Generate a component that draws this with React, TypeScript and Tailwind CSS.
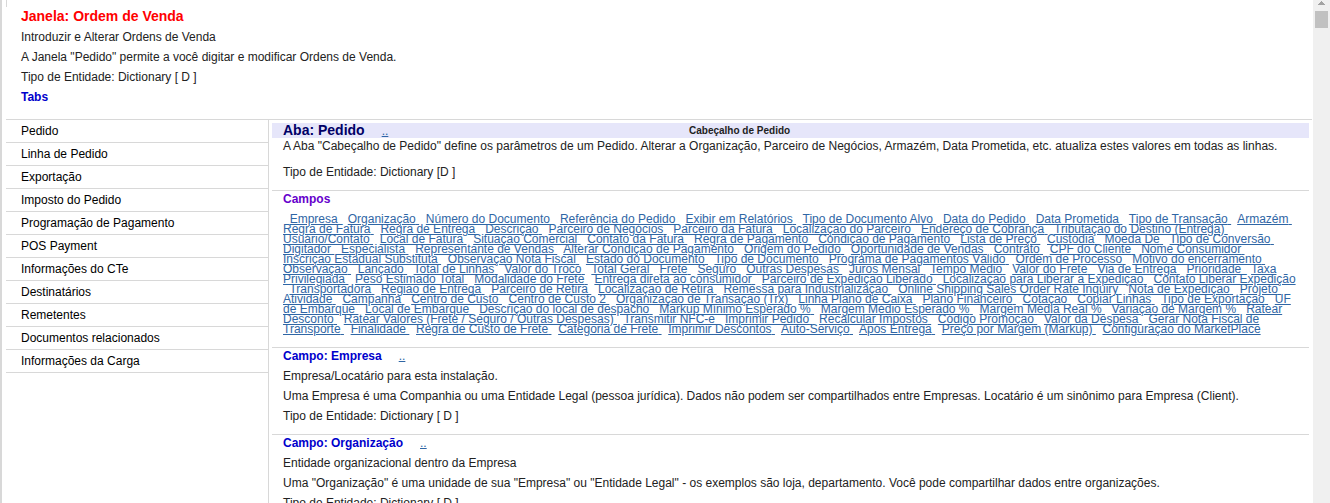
const tabs = [
  'Pedido',
  'Linha de Pedido',
  'Exportação',
  'Imposto do Pedido',
  'Programação de Pagamento',
  'POS Payment',
  'Informações do CTe',
  'Destinatários',
  'Remetentes',
  'Documentos relacionados',
  'Informações da Carga',
]

const fields = [
  'Empresa', 'Organização', 'Número do Documento', 'Referência do Pedido',
  'Exibir em Relatórios', 'Tipo de Documento Alvo', 'Data do Pedido',
  'Data Prometida', 'Tipo de Transação', 'Armazém', 'Regra de Fatura',
  'Regra de Entrega', 'Descrição', 'Parceiro de Negócios',
  'Parceiro da Fatura', 'Localização do Parceiro', 'Endereço de Cobrança',
  'Tributação do Destino (Entrega)', 'Usuário/Contato', 'Local de Fatura',
  'Situação Comercial', 'Contato da Fatura', 'Regra de Pagamento',
  'Condição de Pagamento', 'Lista de Preço', 'Custódia', 'Moeda De',
  'Tipo de Conversão', 'Digitador', 'Especialista',
  'Representante de Vendas', 'Alterar Condição de Pagamento',
  'Origem do Pedido', 'Oportunidade de Vendas', 'Contrato',
  'CPF do Cliente', 'Nome Consumidor', 'Inscrição Estadual Substituta',
  'Observação Nota Fiscal', 'Estado do Documento', 'Tipo de Documento',
  'Programa de Pagamentos Válido', 'Ordem de Processo',
  'Motivo do encerramento', 'Observação', 'Lançado', 'Total de Linhas',
  'Valor do Troco', 'Total Geral', 'Frete', 'Seguro', 'Outras Despesas',
  'Juros Mensal', 'Tempo Médio', 'Valor do Frete', 'Via de Entrega',
  'Prioridade', 'Taxa Privilegiada', 'Peso Estimado Total',
  'Modalidade do Frete', 'Entrega direta ao consumidor',
  'Parceiro de Expedição Liberado', 'Localização para Liberar a Expedição',
  'Contato Liberar Expedição', 'Transportadora', 'Região de Entrega',
  'Parceiro de Retira', 'Localização de Retira',
  'Remessa para Industrialização',
  'Online Shipping Sales Order Rate Inquiry', 'Nota de Expedição',
  'Projeto', 'Atividade', 'Campanha', 'Centro de Custo',
  'Centro de Custo 2', 'Organização de Transação (Trx)',
  'Linha Plano de Caixa', 'Plano Financeiro', 'Cotação',
  'Copiar Linhas', 'Tipo de Exportação', 'UF de Embarque',
  'Local de Embarque', 'Descrição do local de despacho',
  'Markup Mínimo Esperado %', 'Margem Médio Esperado %',
  'Margem Média Real %', 'Variação de Margem %', 'Ratear Desconto',
  'Ratear Valores (Frete / Seguro / Outras Despesas)',
  'Transmitir NFC-e', 'Imprimir Pedido', 'Recalcular Impostos',
  'Código Promoção', 'Valor da Despesa', 'Gerar Nota Fiscal de Transporte',
  'Finalidade', 'Regra de Custo de Frete', 'Categoria de Frete',
  'Imprimir Descontos', 'Auto-Serviço', 'Após Entrega',
  'Preço por Margem (Markup)', 'Configuração do MarketPlace',
]

const details = [
  {
    name: 'Empresa',
    summary: 'Empresa/Locatário para esta instalação.',
    help: 'Uma Empresa é uma Companhia ou uma Entidade Legal (pessoa jurídica). Dados não podem ser compartilhados entre Empresas. Locatário é um sinônimo para Empresa (Client).',
  },
  {
    name: 'Organização',
    summary: 'Entidade organizacional dentro da Empresa',
    help: 'Uma "Organização" é uma unidade de sua "Empresa" ou "Entidade Legal" - os exemplos são loja, departamento. Você pode compartilhar dados entre organizações.',
  },
]

function BackLink() {
  return (
    <a
      href="#top"
      className="ml-[17px] text-[12px] leading-none font-normal text-[#2f66a5] underline"
    >
      ..
    </a>
  )
}

function FieldDetail({ name, summary, help }: (typeof details)[number]) {
  return (
    <section
      id={name}
      className="flex flex-col gap-1 border-t border-[#d8d8d8] px-[11px] pb-[10px]"
    >
      <h3 className="font-bold text-[#0000cc]">
        Campo: {name}
        <BackLink />
      </h3>
      <p>{summary}</p>
      <p>{help}</p>
      <p>Tipo de Entidade: Dictionary [ D ]</p>
    </section>
  )
}

function ScrollTrack() {
  return (
    <div className="flex w-[17px] shrink-0 flex-col items-center bg-[#f0f0f0]">
      <svg viewBox="0 0 7 4" className="mt-px h-1 w-[7px] fill-[#a3a3a3]" shapeRendering="crispEdges">
        <path d="M3 0h1v1h1v1h1v1h1v1H0V3h1V2h1V1h1z" />
      </svg>
      <div className="mt-[6px] h-[17px] w-[13px] bg-[#c1c1c1]" />
    </div>
  )
}

export default function App() {
  return (
    <div
      id="top"
      className="flex h-screen overflow-hidden border-l-2 border-[#d8d8d8] bg-white font-['Liberation_Sans',Arial,sans-serif] text-[12px] leading-4 text-[#222222]"
    >
      <div className="mr-px ml-1 flex min-w-0 flex-1 flex-col">
        <header className="flex">
          <div className="h-[7px] w-px bg-[#d8d8d8]" />
          <div className="px-[14px] pt-[7px] pb-3 leading-5">
            <h1 className="mb-0.5 text-[14px] leading-[18px] font-bold text-[#ff0000]">
              Janela: Ordem de Venda
            </h1>
            <p>Introduzir e Alterar Ordens de Venda</p>
            <p>A Janela "Pedido" permite a você digitar e modificar Ordens de Venda.</p>
            <p>Tipo de Entidade: Dictionary [ D ]</p>
            <h2 className="font-bold text-[#0000cc]">Tabs</h2>
          </div>
        </header>

        <div className="flex min-h-0 flex-1 border-t border-[#d8d8d8]">
          <nav className="w-[263px] shrink-0 border-r border-[#d8d8d8] text-black">
            {tabs.map((tab) => (
              <a
                key={tab}
                href={`#${tab}`}
                className="block border-b border-[#d8d8d8] px-[15px] leading-[22px]"
              >
                {tab}
              </a>
            ))}
          </nav>

          <main className="mx-[3px] min-w-0 flex-1 pt-[3px]">
            <section className="pb-[10px]">
              <div className="flex items-center bg-[#e6e6fa] px-[11px] leading-[15px]">
                <h2 className="w-2/5 text-[14px] leading-[15px] font-bold text-[#000066]">
                  Aba: Pedido
                  <BackLink />
                </h2>
                <span className="text-[10px] font-bold">Cabeçalho de Pedido</span>
              </div>
              <div className="flex flex-col gap-[10px] px-[11px]">
                <p>
                  A Aba "Cabeçalho de Pedido" define os parâmetros de um Pedido. Alterar a Organização,
                  Parceiro de Negócios, Armazém, Data Prometida, etc. atualiza estes valores em todas as
                  linhas.
                </p>
                <p>Tipo de Entidade: Dictionary [D ]</p>
              </div>
            </section>

            <section className="border-t border-[#d8d8d8] px-[11px] pb-[13px]">
              <h3 className="font-bold text-[#6600cc]">Campos</h3>
              <p className="mt-[7px] leading-[10px] text-[#2f66a5]">
                {fields.map((field) => (
                  <span key={field}>
                    &nbsp;{' '}
                    <a href={`#${field}`} className="underline">
                      {field}{' '}
                    </a>
                  </span>
                ))}
              </p>
            </section>

            {details.map((detail) => (
              <FieldDetail key={detail.name} {...detail} />
            ))}
          </main>
        </div>
      </div>
      <ScrollTrack />
    </div>
  )
}
